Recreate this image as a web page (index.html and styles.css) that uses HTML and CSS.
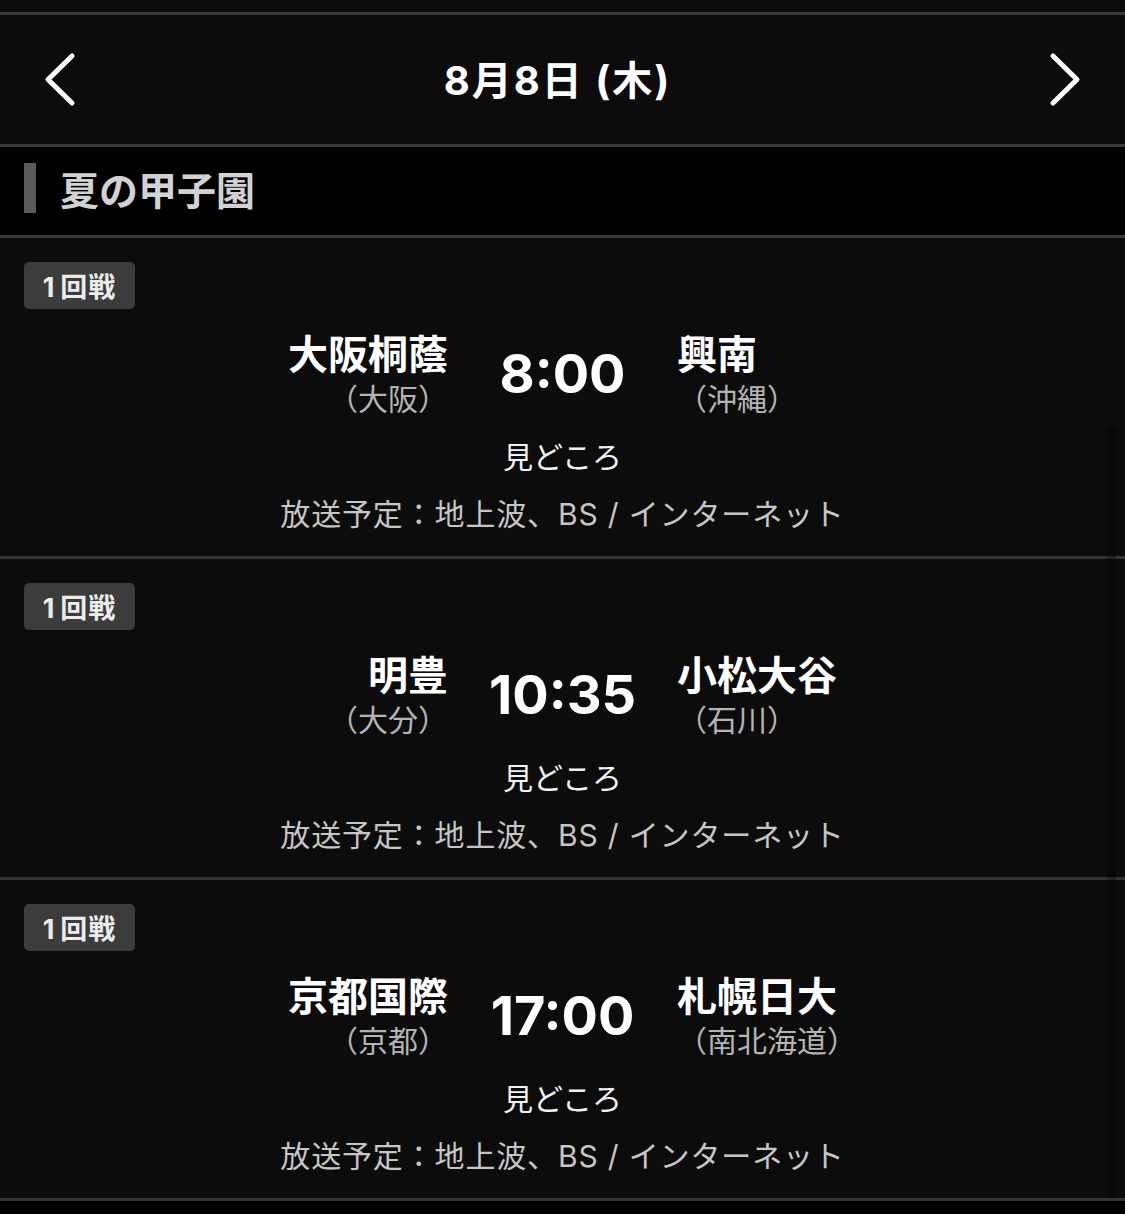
FILE: index.html
```html
<!DOCTYPE html>
<html lang="ja">
<head>
<meta charset="utf-8">
<title>夏の甲子園 8月8日</title>
<link rel="stylesheet" href="styles.css">
</head>
<body>
<div class="page">
  <div class="top-strip"></div>
  <nav class="date-nav">
    <svg class="chev" width="40" height="60" viewBox="0 0 40 60"><path d="M32 6 L8 29.5 L32 53" fill="none" stroke="#fff" stroke-width="5" stroke-linecap="round" stroke-linejoin="round"/></svg>
    <div class="date"><span class="lat">8</span>月<span class="lat">8</span>日<span class="lat"> (</span>木<span class="lat">)</span></div>
    <svg class="chev" width="40" height="60" viewBox="0 0 40 60"><path d="M8 6 L32 29.5 L8 53" fill="none" stroke="#fff" stroke-width="5" stroke-linecap="round" stroke-linejoin="round"/></svg>
  </nav>
  <div class="section-title"><span class="bar"></span><h2>夏の甲子園</h2></div>

  <section class="match">
    <div class="badge"><span class="lat">1</span>回戦</div>
    <div class="matchup">
      <div class="team left"><div class="name">大阪桐蔭</div><div class="pref">（大阪）</div></div>
      <div class="time">8:00</div>
      <div class="team right"><div class="name">興南</div><div class="pref">（沖縄）</div></div>
    </div>
    <div class="highlight">見どころ</div>
    <div class="broadcast">放送予定：地上波、<span class="lat">BS / </span>インターネット</div>
  </section>

  <section class="match">
    <div class="badge"><span class="lat">1</span>回戦</div>
    <div class="matchup">
      <div class="team left"><div class="name">明豊</div><div class="pref">（大分）</div></div>
      <div class="time">10:35</div>
      <div class="team right"><div class="name">小松大谷</div><div class="pref">（石川）</div></div>
    </div>
    <div class="highlight">見どころ</div>
    <div class="broadcast">放送予定：地上波、<span class="lat">BS / </span>インターネット</div>
  </section>

  <section class="match">
    <div class="badge"><span class="lat">1</span>回戦</div>
    <div class="matchup">
      <div class="team left"><div class="name">京都国際</div><div class="pref">（京都）</div></div>
      <div class="time">17:00</div>
      <div class="team right"><div class="name">札幌日大</div><div class="pref">（南北海道）</div></div>
    </div>
    <div class="highlight">見どころ</div>
    <div class="broadcast">放送予定：地上波、<span class="lat">BS / </span>インターネット</div>
  </section>

  <div class="scrollbar"></div>
</div>
</body>
</html>
```
FILE: styles.css
```css
* { box-sizing: border-box; }
html, body { margin: 0; padding: 0; background: #000; }
body {
  font-family: "Noto Sans CJK JP", "Noto Sans", sans-serif;
  color: #fff;
  width: 1125px;
  height: 1214px;
  overflow: hidden;
}
.page { position: relative; }
.lat { font-family: Inter, "Noto Sans", sans-serif; }
.top-strip {
  height: 15px;
  background: #0c0c0c;
  border-bottom: 3px solid #393939;
}
.date-nav {
  height: 132px;
  background: #0c0c0c;
  border-bottom: 3px solid #393939;
  display: flex;
  align-items: center;
  justify-content: space-between;
  padding: 0 40px 0 40px;
}
.chev { display: block; }
.date {
  font-weight: 700;
  font-size: 40px;
  line-height: 48px;
  letter-spacing: 2px;
  margin-left: -10px;
}
.section-title {
  height: 91px;
  background: #000;
  border-bottom: 3px solid #393939;
  display: flex;
  align-items: flex-start;
  padding: 16px 0 0 24px;
}
.bar {
  width: 12px;
  height: 50px;
  background: #5a5a5a;
}
.section-title h2 {
  margin: 0 0 0 24px;
  font-size: 39px;
  line-height: 50px;
  font-weight: 700;
  color: #d2d2d2;
}
.match {
  height: 321px;
  background: #0c0c0c;
  border-bottom: 3px solid #333;
  padding: 24px 0 0 0;
}
.badge {
  margin-left: 24px;
  width: 111px;
  height: 47px;
  background: #3c3c3c;
  border-radius: 5px;
  font-size: 27px;
  font-weight: 700;
  line-height: 47px;
  letter-spacing: 1px;
  text-align: center;
  color: #ececec;
}
.badge .lat { margin-right: 5px; }
.matchup {
  display: grid;
  grid-template-columns: 448px 229px 448px;
  align-items: center;
  margin-top: 19px;
}
.team.left { text-align: right; }
.team.right { text-align: left; }
.name {
  font-size: 40px;
  font-weight: 700;
  line-height: 48px;
  color: #fff;
}
.pref {
  font-size: 30px;
  line-height: 36px;
  margin-top: 3px;
  color: #b4b4b4;
}
.time {
  font-family: Inter, "Noto Sans", sans-serif;
  font-weight: 700;
  font-size: 54px;
  line-height: 64px;
  text-align: center;
  margin-top: 4px;
}
.highlight {
  margin-top: 22px;
  text-align: center;
  font-size: 30px;
  line-height: 36px;
  color: #f2f2f2;
}
.broadcast {
  margin-top: 21px;
  text-align: center;
  font-size: 30px;
  line-height: 36px;
  letter-spacing: 0.85px;
  color: #c6c6c6;
}
.scrollbar {
  position: absolute;
  left: 1107px;
  top: 427px;
  width: 9px;
  height: 771px;
  border-radius: 5px;
  background: rgba(0, 0, 0, 0.3);
}
```
